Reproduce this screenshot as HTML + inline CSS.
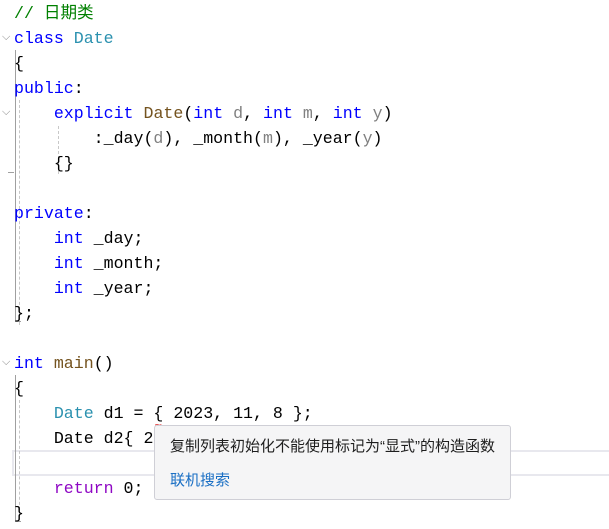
<!DOCTYPE html>
<html><head><meta charset="utf-8"><style>
body{margin:0;width:609px;height:529px;background:#fff;position:relative;overflow:hidden}
.l{position:absolute;left:14px;height:25px;line-height:27px;font-family:"Liberation Mono","Noto Sans CJK SC",monospace;font-size:16.6px;white-space:pre;color:#000}
.k{color:#0000ff}.t{color:#2b91af}.f{color:#74531f}.p{color:#808080}.c{color:#008000}.r{color:#8f08c4}
.g{position:absolute;background:#a0a0a0;width:1px}
.d{position:absolute;border-left:1px dashed #c8c8c8;width:0}
.fold{position:absolute;left:2px;font-size:11px;color:#888;font-family:"DejaVu Sans",sans-serif}
</style></head><body>
<div style="position:absolute;left:12px;top:450px;width:600px;height:22px;border:2px solid #e8e8ee;border-right:none"></div>
<div class="g" style="left:15px;top:50px;height:272px"></div>
<div style="position:absolute;left:15px;top:321px;width:6px;height:1px;background:#a0a0a0"></div>
<div class="g" style="left:15px;top:375px;height:147px"></div>
<div style="position:absolute;left:15px;top:521px;width:6px;height:1px;background:#a0a0a0"></div>
<div class="d" style="left:19px;top:100px;height:225px"></div>
<div class="d" style="left:58px;top:126px;height:48px"></div>
<div style="position:absolute;left:8px;top:172px;width:6px;height:1px;background:#a0a0a0"></div>
<div class="d" style="left:19px;top:400px;height:115px"></div>
<div class="fold" style="top:30px">⌵</div>
<div class="fold" style="top:105px">⌵</div>
<div class="fold" style="top:355px">⌵</div>
<div class="l c" style="top:0">// 日期类</div>
<div class="l" style="top:25px"><span class="k">class</span> <span class="t">Date</span></div>
<div class="l" style="top:50px">{</div>
<div class="l" style="top:75px"><span class="k">public</span>:</div>
<div class="l" style="top:100px">    <span class="k">explicit</span> <span class="f">Date</span>(<span class="k">int</span> <span class="p">d</span>, <span class="k">int</span> <span class="p">m</span>, <span class="k">int</span> <span class="p">y</span>)</div>
<div class="l" style="top:125px">        :_day(<span class="p">d</span>), _month(<span class="p">m</span>), _year(<span class="p">y</span>)</div>
<div class="l" style="top:150px">    {}</div>
<div class="l" style="top:200px"><span class="k">private</span>:</div>
<div class="l" style="top:225px">    <span class="k">int</span> _day;</div>
<div class="l" style="top:250px">    <span class="k">int</span> _month;</div>
<div class="l" style="top:275px">    <span class="k">int</span> _year;</div>
<div class="l" style="top:300px">};</div>
<div class="l" style="top:350px"><span class="k">int</span> <span class="f">main</span>()</div>
<div class="l" style="top:375px">{</div>
<div class="l" style="top:400px">    <span class="t">Date</span> d1 = { 2023, 11, 8 };</div>
<div class="l" style="top:425px">    Date d2{ 2</div>
<div class="l" style="top:475px">    <span class="r">return</span> 0;</div>
<div class="l" style="top:500px">}</div>
<div style="position:absolute;left:154px;top:420px;color:#e03030;font-size:10px;font-family:'DejaVu Sans'">~</div>
<div style="position:absolute;left:154px;top:425px;width:355px;height:73px;background:#f5f5f6;border:1px solid #cfcfd6;border-radius:3px;font-family:'Liberation Sans','Noto Sans CJK SC',sans-serif;font-size:15px">
<div style="position:absolute;left:15px;top:9px;color:#1e1e1e">复制列表初始化不能使用标记为“显式”的构造函数</div>
<div style="position:absolute;left:15px;top:43px;color:#1a6fc4">联机搜索</div>
</div>
</body></html>
